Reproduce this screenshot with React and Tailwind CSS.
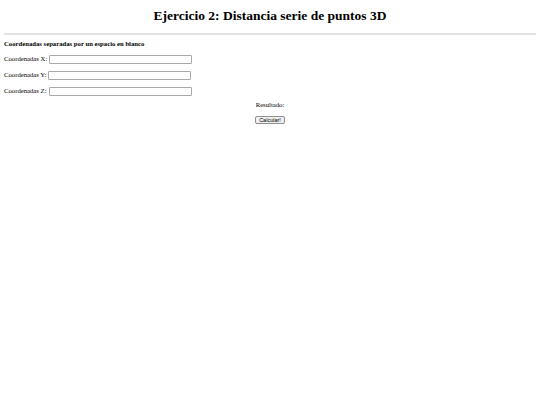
const Row = ({ label }) => (
  <div className="flex items-center gap-[2px] h-[10px]">
    <span className="text-[6.7px] leading-[10px]">{label}</span>
    <input
      type="text"
      className="w-[143px] h-[9px] border border-[#a9a9a9] bg-white rounded-[1px] outline-none"
    />
  </div>
);

export default function App() {
  return (
    <div className="min-h-screen bg-white text-black font-['Liberation_Serif',serif] px-[4px] pt-[7px]">
      <h1 className="text-[13.5px] leading-[18px] font-bold text-center">
        Ejercicio 2: Distancia serie de puntos 3D
      </h1>
      <div className="mt-[8px] h-[2px] bg-[#e3e3e3]" />
      <h4 className="mt-[4px] text-[6.7px] leading-[10px] font-bold">
        Coordenadas separadas por un espacio en blanco
      </h4>
      <div className="mt-[5px] flex flex-col gap-[6px]">
        <Row label="Coordenadas X:" />
        <Row label="Coordenadas Y:" />
        <Row label="Coordenadas Z:" />
      </div>
      <p className="mt-[4px] text-[6.7px] leading-[10px] text-center">Resultado:</p>
      <div className="mt-[6px] flex justify-center">
        <button className="h-[8px] px-[3px] text-[5.5px] leading-[6px] font-['Liberation_Sans',sans-serif] bg-[#efefef] border border-[#8f8f8f] rounded-[2px]">
          Calcular!
        </button>
      </div>
    </div>
  );
}
